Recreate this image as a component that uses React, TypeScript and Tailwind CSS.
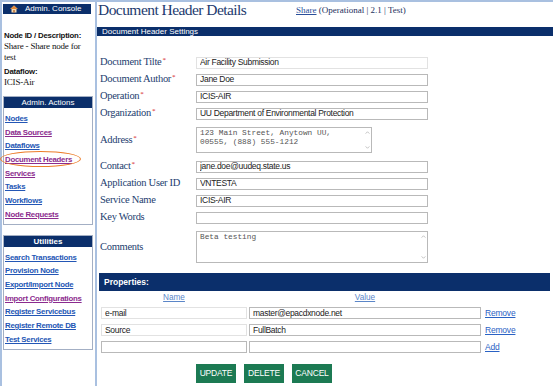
import React from "react";

// Document Header Details admin page — sidebar + header settings form + properties table.

const SANS = "font-['Liberation_Sans',Arial,sans-serif]";
const SERIF = "font-['Liberation_Serif','Times_New_Roman',serif]";
const MONO = "font-['Liberation_Mono','Courier_New',monospace]";

const adminActions = [
  { label: "Nodes", visited: false },
  { label: "Data Sources", visited: true },
  { label: "Dataflows", visited: false },
  { label: "Document Headers", visited: true },
  { label: "Services", visited: true },
  { label: "Tasks", visited: false },
  { label: "Workflows", visited: false },
  { label: "Node Requests", visited: true },
];

const utilities = [
  { label: "Search Transactions", visited: false },
  { label: "Provision Node", visited: false },
  { label: "Export/Import Node", visited: false },
  { label: "Import Configurations", visited: true },
  { label: "Register Servicebus", visited: false },
  { label: "Register Remote DB", visited: false },
  { label: "Test Services", visited: false },
];

function HouseIcon() {
  return (
    <svg viewBox="0 0 8 8" className="w-[8px] h-[8px]" aria-hidden>
      <path d="M4 0.5L0.3 4h1.2v3.5h5V4h1.2z" fill="#f3d9b0" />
      <path d="M4 0.5L0.3 4h7.4z" fill="#e08a3c" />
      <rect x="3.3" y="5" width="1.4" height="2.5" fill="#b8662a" />
    </svg>
  );
}

function SideBox({
  title,
  titleBold,
  links,
  className,
}: {
  title: string;
  titleBold?: boolean;
  links: { label: string; visited: boolean }[];
  className?: string;
}) {
  return (
    <div className={`w-[90px] ml-[1px] border border-[#a3afc4] ${className ?? ""}`}>
      <div
        className={`h-[11px] bg-[#0b2f6b] text-white text-center text-[8px] leading-[11px] ${SANS} ${
          titleBold ? "font-bold" : ""
        }`}
      >
        {title}
      </div>
      <ul className="pt-[1px] pl-[1px]">
        {links.map((l) => (
          <li key={l.label} className="leading-[13.7px] h-[13.7px]">
            <a
              href="#"
              className={`${SANS} font-bold text-[7.8px] tracking-[-0.25px] underline ${
                l.visited ? "text-[#8b2b8e]" : "text-[#2356b5]"
              }`}
            >
              {l.label}
            </a>
          </li>
        ))}
      </ul>
    </div>
  );
}

function Sidebar() {
  return (
    <aside className="relative w-[97px] h-full shrink-0 border-l-2 border-r-2 border-[#a9c0e0]">
      <div className="mt-[2px] ml-[1px] w-[88px] h-[10px] bg-[#0b2f6b] flex items-center pl-[7px]">
        <HouseIcon />
        <span className={`ml-[7px] text-white text-[8px] leading-[10px] ${SANS}`}>
          Admin. Console
        </span>
      </div>

      <div className="pl-[2px] text-[#111]">
        <div className={`mt-[16px] leading-[11px] text-[7.8px] tracking-[-0.2px] font-bold ${SANS}`}>
          Node ID / Description:
        </div>
        <div className={`leading-[11px] text-[9px] tracking-[-0.2px] ${SERIF}`}>
          Share - Share node for
          <br />
          test
        </div>
        <div className={`mt-[4px] leading-[10px] text-[7.8px] tracking-[-0.2px] font-bold ${SANS}`}>
          Dataflow:
        </div>
        <div className={`leading-[10px] text-[9px] tracking-[-0.2px] ${SERIF}`}>ICIS-Air</div>
      </div>

      <SideBox title="Admin. Actions" links={adminActions} className="mt-[9px] pb-[5px]" />
      <SideBox title="Utilities" titleBold links={utilities} className="mt-[10px] pb-[6px]" />

      {/* hand-drawn highlight around the current page */}
      <div className="absolute left-[-2px] top-[149px] w-[81px] h-[16px] rounded-[50%] border-[1.5px] border-[#ec7d2a]" />
    </aside>
  );
}

function Req() {
  return <span className="text-[#d42020] text-[7px] align-top ml-[1px] leading-none">*</span>;
}

function Row({
  label,
  required,
  className,
  children,
}: {
  label: string;
  required?: boolean;
  className?: string;
  children: React.ReactNode;
}) {
  return (
    <div className={`flex items-center ${className ?? "h-[17px]"}`}>
      <div
        className={`w-[96px] shrink-0 text-[10.5px] tracking-[-0.3px] leading-none text-[#24406f] ${SERIF}`}
      >
        {label}
        {required && <Req />}
      </div>
      {children}
    </div>
  );
}

function TextInput({ value, faint, w = "w-[232px]" }: { value: string; faint?: boolean; w?: string }) {
  return (
    <input
      readOnly
      value={value}
      className={`${w} h-[12px] px-[3px] bg-white text-[8.5px] tracking-[-0.3px] text-[#222] outline-none border ${
        faint ? "border-[#e2e2e2]" : "border-[#b9b9b9]"
      } ${SANS}`}
    />
  );
}

function Chevrons() {
  return (
    <div className="w-[8px] shrink-0 flex flex-col justify-between items-center py-[3px]">
      <svg viewBox="0 0 6 4" className="w-[5px] h-[3px]" aria-hidden>
        <path d="M0.5 3.5L3 1l2.5 2.5" fill="none" stroke="#9a9a9a" strokeWidth="0.8" />
      </svg>
      <svg viewBox="0 0 6 4" className="w-[5px] h-[3px]" aria-hidden>
        <path d="M0.5 0.5L3 3l2.5-2.5" fill="none" stroke="#9a9a9a" strokeWidth="0.8" />
      </svg>
    </div>
  );
}

function TextArea({ value, w, h }: { value: string; w: string; h: string }) {
  return (
    <div className={`${w} ${h} flex border border-[#b9b9b9] bg-white`}>
      <textarea
        readOnly
        value={value}
        className={`flex-1 resize-none overflow-hidden outline-none px-[3px] pt-[1px] text-[7.8px] leading-[9px] text-[#555] ${MONO}`}
      />
      <Chevrons />
    </div>
  );
}

export default function App() {
  return (
    <div className="w-[553px] h-[386px] bg-white border-t-2 border-[#a9c0e0] flex overflow-hidden">
      <Sidebar />

      <main className="flex-1 flex flex-col">
        <div className="h-[25px] flex items-start">
          <h1
            className={`w-[199px] pl-[1px] text-[15.5px] leading-[16px] tracking-[-0.55px] text-[#1d3a6e] ${SERIF}`}
          >
            Document Header Details
          </h1>
          <div className={`mt-[2px] text-[9px] leading-[12px] text-[#1c2f5c] ${SERIF}`}>
            <a href="#" className="underline text-[#2a4f9a]">
              Share
            </a>{" "}
            (Operational | 2.1 | Test)
          </div>
        </div>

        <div className={`h-[9px] bg-[#0b2f6b] text-white text-[8px] leading-[9px] pl-[5px] ${SANS}`}>
          Document Header Settings
        </div>

        <div className="pt-[18px] pl-[3px]">
          <Row label="Document Tilte" required>
            <TextInput value="Air Facility Submission" faint />
          </Row>
          <Row label="Document Author" required>
            <TextInput value="Jane Doe" />
          </Row>
          <Row label="Operation" required>
            <TextInput value="ICIS-AIR" />
          </Row>
          <Row label="Organization" required>
            <TextInput value="UU Department of Environmental Protection" />
          </Row>
          <Row label="Address" required className="h-[36px]">
            <TextArea
              value={"123 Main Street, Anytown UU,\n00555, (888) 555-1212"}
              w="w-[176px]"
              h="h-[26px]"
            />
          </Row>
          <Row label="Contact" required>
            <TextInput value="jane.doe@uudeq.state.us" />
          </Row>
          <Row label="Application User ID">
            <TextInput value="VNTESTA" />
          </Row>
          <Row label="Service Name">
            <TextInput value="ICIS-AIR" />
          </Row>
          <Row label="Key Words">
            <TextInput value="" />
          </Row>
          <Row label="Comments" className="h-[42px]">
            <TextArea value="Beta testing" w="w-[232px]" h="h-[32px]" />
          </Row>
        </div>

        <div
          className={`mt-[5px] ml-[2px] mr-[3px] h-[18px] bg-[#0b2f6b] text-white font-bold text-[8.5px] leading-[18px] pl-[5px] ${SANS}`}
        >
          Properties:
        </div>

        <div className={`pl-[4px] ${SANS}`}>
          <div className="flex h-[13px] leading-[13px] text-[8.2px] text-[#5b86c8]">
            <div className="w-[146px] text-center">
              <span className="underline">Name</span>
            </div>
            <div className="w-[232px] ml-[2px] text-center">
              <span className="underline">Value</span>
            </div>
          </div>

          <div className="mt-[3px] flex items-center gap-[2px]">
            <TextInput value="e-mail" faint w="w-[146px]" />
            <TextInput value="master@epacdxnode.net" />
            <a href="#" className="ml-[2px] text-[8.5px] tracking-[-0.2px] underline text-[#2a62c4]">
              Remove
            </a>
          </div>
          <div className="mt-[4px] flex items-center gap-[2px]">
            <TextInput value="Source" faint w="w-[146px]" />
            <TextInput value="FullBatch" />
            <a href="#" className="ml-[2px] text-[8.5px] tracking-[-0.2px] underline text-[#2a62c4]">
              Remove
            </a>
          </div>
          <div className="mt-[4px] flex items-center gap-[2px]">
            <TextInput value="" w="w-[146px]" />
            <TextInput value="" />
            <a href="#" className="ml-[2px] text-[8.5px] tracking-[-0.2px] underline text-[#2a62c4]">
              Add
            </a>
          </div>
        </div>

        <div className={`mt-[11px] pl-[99px] flex gap-[8px] ${SANS}`}>
          {["UPDATE", "DELETE", "CANCEL"].map((b) => (
            <button
              key={b}
              className="w-[40px] h-[19px] bg-[#1c7a53] text-white text-[8.5px] tracking-[-0.2px] leading-[19px] text-center"
            >
              {b}
            </button>
          ))}
        </div>
      </main>
    </div>
  );
}
